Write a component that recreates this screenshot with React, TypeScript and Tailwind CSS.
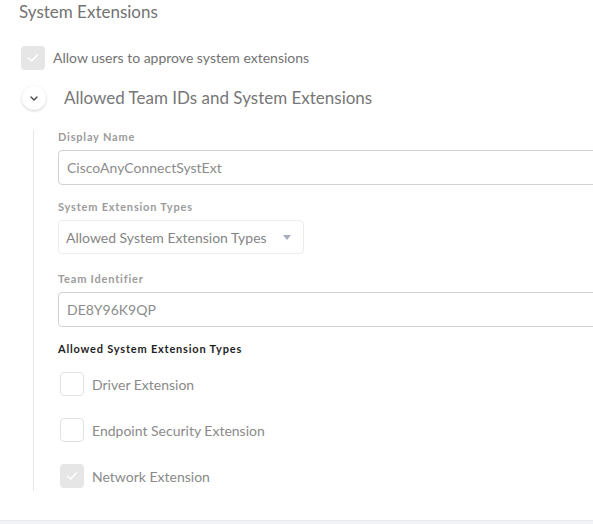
import React from 'react'

const font = { fontFamily: '"Lato", "Noto Sans", sans-serif' }

function Check({ checked }: { checked?: boolean }) {
  if (checked) {
    return (
      <div className="w-6 h-6 rounded-[4px] bg-[#e6e6e6] flex items-center justify-center shrink-0">
        <svg width="12" height="10" viewBox="0 0 12 10" fill="none">
          <path d="M1.5 5.2 L4.6 8 L10.5 1.8" stroke="#ffffff" strokeWidth="1.4" strokeLinecap="round" strokeLinejoin="round" />
        </svg>
      </div>
    )
  }
  return <div className="w-6 h-6 rounded-[4px] border border-[#e2e2e2] bg-white shrink-0" />
}

function Label({ children, dark }: { children: React.ReactNode; dark?: boolean }) {
  return (
    <div className={`h-[14px] leading-[14px] text-[11px] font-bold tracking-[0.8px] ${dark ? 'text-[#1f1f1f] tracking-[0.6px]' : 'text-[#9c9c9c]'}`}>
      {children}
    </div>
  )
}

function TextInput({ value }: { value: string }) {
  return (
    <div className="mt-[6px] h-[35px] w-[560px] rounded-l-[4px] border border-[#d2d2d2] flex items-center pl-[8px] text-[14px] text-[#8c8c8c]">
      {value}
    </div>
  )
}

const types = [
  { name: 'Driver Extension', checked: false },
  { name: 'Endpoint Security Extension', checked: false },
  { name: 'Network Extension', checked: true },
]

export default function App() {
  return (
    <div className="w-full h-[524px] bg-white overflow-hidden flex flex-col" style={font}>
      <div className="pl-[19px] h-[24px] leading-[24px] text-[17px] text-[#737373]">System Extensions</div>

      <div className="mt-[22px] pl-[21px] flex items-center gap-[8px]">
        <Check checked />
        <span className="text-[14px] text-[#737373] -mt-[2px]">Allow users to approve system extensions</span>
      </div>

      <div className="mt-[16px] pl-[22px] flex items-center h-6">
        <div className="w-6 h-6 rounded-full bg-white shadow-[0_1px_3px_rgba(0,0,0,0.18)] flex items-center justify-center">
          <svg width="8" height="5" viewBox="0 0 8 5" fill="none">
            <path d="M1 1 L4 4 L7 1" stroke="#444" strokeWidth="1.3" strokeLinecap="round" strokeLinejoin="round" />
          </svg>
        </div>
        <span className="ml-[18px] text-[17px] text-[#777777]">Allowed Team IDs and System Extensions</span>
      </div>

      <div className="mt-[20px] ml-[33px] border-l border-[#e6e6e6] pl-[24px] pb-[3px]">
        <Label>Display Name</Label>
        <TextInput value="CiscoAnyConnectSystExt" />

        <div className="mt-[15px]">
          <Label>System Extension Types</Label>
        </div>
        <div className="mt-[6px] h-[34px] w-[246px] rounded-[4px] border border-[#ececec] flex items-center justify-between pl-[7px] pr-[12px] text-[14px] text-[#858585]">
          <span>Allowed System Extension Types</span>
          <svg width="8" height="5" viewBox="0 0 8 5">
            <path d="M0 0 H8 L4 5 Z" fill="#a9acbb" />
          </svg>
        </div>

        <div className="mt-[18px]">
          <Label>Team Identifier</Label>
        </div>
        <TextInput value="DE8Y96K9QP" />

        <div className="mt-[15px]">
          <Label dark>Allowed System Extension Types</Label>
        </div>

        <div className="mt-[16px] pl-[2px] flex flex-col gap-[22px]">
          {types.map(t => (
            <div key={t.name} className="flex items-center gap-[8px]">
              <Check checked={t.checked} />
              <span className="text-[14px] text-[#8a8a8a]">{t.name}</span>
            </div>
          ))}
        </div>
      </div>

      <div className="mt-[29px] flex-1 bg-[#f2f3f7] border-t border-[#e8e9ef]" />
    </div>
  )
}
